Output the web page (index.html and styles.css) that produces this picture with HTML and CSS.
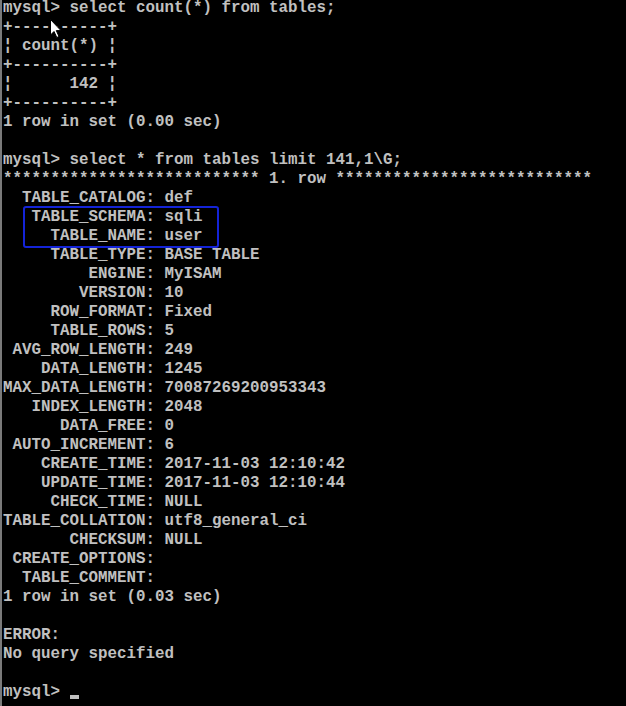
FILE: index.html
```html
<!DOCTYPE html>
<html>
<head>
<meta charset="utf-8">
<link rel="stylesheet" href="styles.css">
</head>
<body>
<div class="console">
<pre class="out">mysql&gt; select count(*) from tables;
+----------+
¦ count(*) ¦
+----------+
¦      142 ¦
+----------+
1 row in set (0.00 sec)

mysql&gt; select * from tables limit 141,1\G;
*************************** 1. row ***************************
  TABLE_CATALOG: def
   TABLE_SCHEMA: sqli
     TABLE_NAME: user
     TABLE_TYPE: BASE TABLE
         ENGINE: MyISAM
        VERSION: 10
     ROW_FORMAT: Fixed
     TABLE_ROWS: 5
 AVG_ROW_LENGTH: 249
    DATA_LENGTH: 1245
MAX_DATA_LENGTH: 70087269200953343
   INDEX_LENGTH: 2048
      DATA_FREE: 0
 AUTO_INCREMENT: 6
    CREATE_TIME: 2017-11-03 12:10:42
    UPDATE_TIME: 2017-11-03 12:10:44
     CHECK_TIME: NULL
TABLE_COLLATION: utf8_general_ci
       CHECKSUM: NULL
 CREATE_OPTIONS:
  TABLE_COMMENT:
1 row in set (0.03 sec)

ERROR:
No query specified

mysql&gt; <span class="caret"></span></pre>
<div class="highlight"></div>
<svg class="pointer" width="14" height="20" viewBox="0 0 14 20">
<path d="M0.5 0.5 L0.5 16 L4 12.5 L6.8 18.5 L9 17.5 L6.3 11.6 L11 11.6 Z" fill="#ffffff" stroke="#000000" stroke-width="1"/>
</svg>
</div>
</body>
</html>
```
FILE: styles.css
```css
html, body {
  margin: 0;
  padding: 0;
  background: #000;
}
.console {
  position: relative;
  width: 626px;
  height: 706px;
  overflow: hidden;
  background: #000;
  border-left: 2px solid #7a7a7a;
  box-sizing: border-box;
}
.out {
  margin: -1px 0 0 0;
  padding: 0 0 0 1px;
  font-family: "Liberation Mono", "DejaVu Sans Mono", monospace;
  font-size: 15.83px;
  font-weight: bold;
  line-height: 19px;
  color: #c0c0c0;
  white-space: pre;
}
.caret {
  display: inline-block;
  width: 9px;
  height: 4px;
  background: #c0c0c0;
  vertical-align: -3px;
}
.highlight {
  position: absolute;
  left: 21px;
  top: 206px;
  width: 196px;
  height: 42px;
  border: 2px solid #1424d8;
  border-radius: 3px;
  box-sizing: border-box;
}
.pointer {
  position: absolute;
  left: 48px;
  top: 19px;
}
```
